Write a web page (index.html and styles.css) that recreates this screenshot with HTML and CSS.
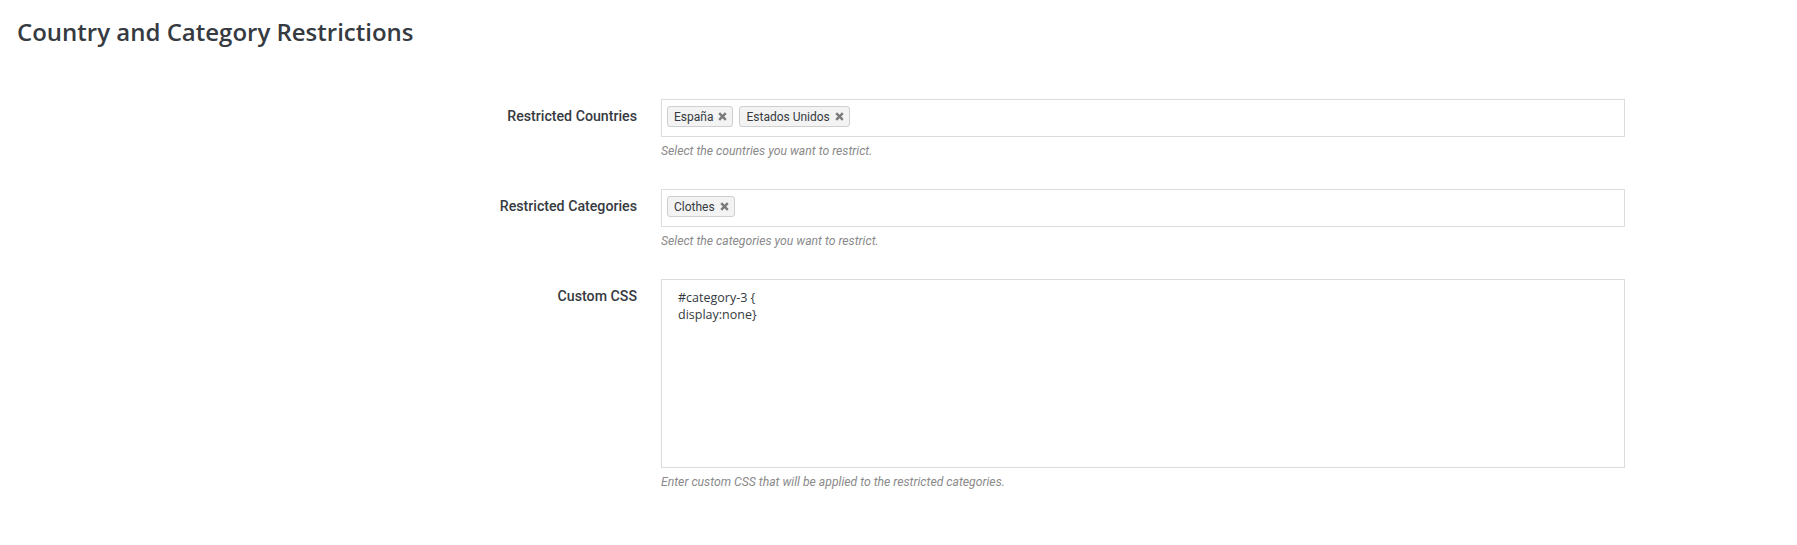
FILE: index.html
```html
<!DOCTYPE html>
<html lang="en">
<head>
<meta charset="utf-8">
<title>Country and Category Restrictions</title>
<link rel="stylesheet" href="styles.css">
</head>
<body>
<div class="page">
  <h1 class="title">Country and Category Restrictions</h1>
  <form class="form">
    <div class="row">
      <label class="label">Restricted Countries</label>
      <div class="field">
        <div class="tagbox">
          <span class="tag">España <svg class="x" viewBox="0 0 10 10"><path d="M2 2L8 8M8 2L2 8"/></svg></span>
          <span class="tag">Estados Unidos <svg class="x" viewBox="0 0 10 10"><path d="M2 2L8 8M8 2L2 8"/></svg></span>
        </div>
        <p class="help">Select the countries you want to restrict.</p>
      </div>
    </div>
    <div class="row">
      <label class="label">Restricted Categories</label>
      <div class="field">
        <div class="tagbox">
          <span class="tag">Clothes <svg class="x" viewBox="0 0 10 10"><path d="M2 2L8 8M8 2L2 8"/></svg></span>
        </div>
        <p class="help">Select the categories you want to restrict.</p>
      </div>
    </div>
    <div class="row">
      <label class="label">Custom CSS</label>
      <div class="field">
        <div class="textarea">#category-3 {<br>display:none}</div>
        <p class="help">Enter custom CSS that will be applied to the restricted categories.</p>
      </div>
    </div>
  </form>
</div>
</body>
</html>
```

FILE: styles.css
```css
* { box-sizing: border-box; }
html, body { margin: 0; padding: 0; background: #fff; }
body { font-family: Roboto, "Noto Sans", sans-serif; color: #363a41; }
.page { padding: 0 0 0 17px; }
.title {
  margin: 0;
  padding-top: 17px;
  height: 99px;
  font-family: "Open Sans", sans-serif;
  font-weight: 600;
  font-size: 24px;
  line-height: 30px;
  color: #363a41;
}
.form { display: flex; flex-direction: column; }
.row { display: grid; grid-template-columns: 620px 964px; column-gap: 24px; }
.label {
  text-align: right;
  font-weight: 500;
  font-size: 14.2px;
  line-height: 18px;
  padding-top: 8px;
  color: #363a41;
}
.field { display: flex; flex-direction: column; }
.tagbox {
  height: 38px;
  border: 1px solid #dcdcdc;
  padding: 6px 5px;
  display: flex;
  gap: 6px;
  align-items: flex-start;
}
.tag {
  height: 21px;
  display: inline-flex;
  align-items: center;
  gap: 4px;
  padding: 0 4px 0 6px;
  background: #f3f3f3;
  border: 1px solid #cfcfcf;
  border-radius: 3px;
  font-size: 12px;
  color: #363a41;
}
.x { width: 11px; height: 11px; stroke: #7a7a7a; stroke-width: 2.2; fill: none; }
.help {
  margin: 0;
  height: 52px;
  padding-top: 6px;
  font-size: 12.2px;
  line-height: 16px;
  font-style: italic;
  color: #8a8a8a;
}
.textarea {
  height: 189px;
  border: 1px solid #dcdcdc;
  padding: 9px 16px;
  font-family: "Open Sans", sans-serif;
  font-size: 12.5px;
  line-height: 17px;
  color: #363a41;
}
```
